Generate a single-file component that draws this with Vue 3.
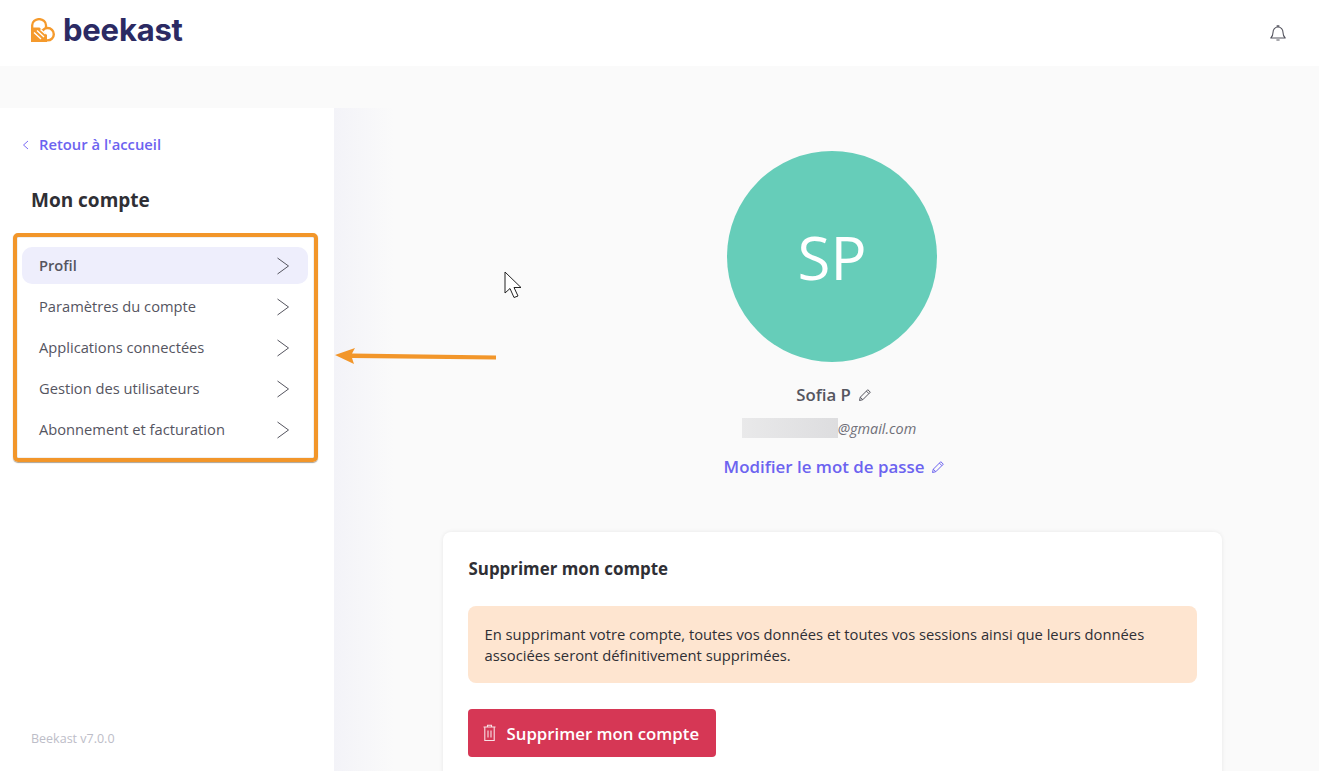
<template>
  <div class="page">
    <header class="topbar">
      <div class="logo">
        <svg class="logo-mark" width="24" height="24" viewBox="0 0 24 24" fill="none">
          <path d="M1.2 11V7.3a6.9 6.2 0 0 1 13.8 0V10" stroke="#f59a2c" stroke-width="2.3" />
          <circle cx="16.6" cy="16.2" r="6.2" stroke="#f59a2c" stroke-width="2.4" />
          <path d="M0 9.6H8.5L16 17V24H0Z" fill="#f59a2c" />
          <path d="M6 12.5l7 6.5M3 14.5l7 6.5M9.5 11.5l5 4.5" stroke="#fff" stroke-width="1.4" />
        </svg>
        <span class="logo-text">beekast</span>
      </div>
      <svg class="bell" width="18" height="18" viewBox="0 0 18 18" fill="none" stroke="#55555f" stroke-width="1.1">
        <path d="M1.8 14h14.4c-1.3-1.3-2.2-2.6-2.2-5.6 0-3-2-5.4-5-5.4s-5 2.4-5 5.4c0 3-.9 4.3-2.2 5.6Z" stroke-linejoin="round" />
        <path d="M8.2 3V1.8h1.6V3M7.4 16h3.2" />
      </svg>
    </header>

    <div class="body">
      <aside class="sidebar">
        <a class="back">
          <svg width="7" height="10" viewBox="0 0 7 10" fill="none" stroke="#7b6cf6" stroke-width="1">
            <path d="M6 1 1.5 5 6 9" />
          </svg>
          <span>Retour à l'accueil</span>
        </a>
        <h2 class="side-title">Mon compte</h2>
        <nav class="menu">
          <a v-for="item in menu" :key="item" class="menu-item" :class="{ active: item === 'Profil' }">
            <span class="menu-label">{{ item }}</span>
            <svg width="14" height="18" viewBox="0 0 14 18" fill="none" stroke="#55555f" stroke-width="1">
              <path d="M1.5 1 12.5 9 1.5 17" />
            </svg>
          </a>
        </nav>
        <div class="version">Beekast v7.0.0</div>
      </aside>

      <main class="main">
        <div class="avatar">SP</div>
        <div class="name">
          <span>Sofia P</span>
          <svg width="14" height="14" viewBox="0 0 14 14" fill="none" stroke="#55555f" stroke-width="1">
            <path :d="pencil" stroke-linejoin="round" />
          </svg>
        </div>
        <div class="email"><span class="blur"></span><span>@gmail.com</span></div>
        <a class="password">
          <span>Modifier le mot de passe</span>
          <svg width="14" height="14" viewBox="0 0 14 14" fill="none" stroke="#6c63f0" stroke-width="1">
            <path :d="pencil" stroke-linejoin="round" />
          </svg>
        </a>

        <section class="card">
          <h3>Supprimer mon compte</h3>
          <p class="warning">
            En supprimant votre compte, toutes vos données et toutes vos sessions ainsi que leurs données
            associées seront définitivement supprimées.
          </p>
          <button class="danger">
            <svg width="13" height="18" viewBox="0 0 13 18" fill="none" stroke="#fff" stroke-width="1.1" opacity="0.85">
              <path d="M.5 3h12M4.5 3V1.2h4V3M1.8 3v13.5h9.4V3M5 6.5v7M8 6.5v7" />
            </svg>
            <span>Supprimer mon compte</span>
          </button>
        </section>
      </main>
    </div>

    <!-- annotations drawn on top of the capture -->
    <div class="frame"></div>
    <svg class="arrow" width="164" height="20" viewBox="0 0 164 20">
      <path d="M2 8 22 1 19 6.5 163 8.5V12.5L19 11 21 17Z" fill="#f2962a" />
    </svg>
    <svg class="cursor" width="20" height="30" viewBox="0 0 20 30">
      <path d="M1 1V22L6 17.5 10 26.5 14 25 10 16.5H17Z" fill="#fff" stroke="#222" stroke-width="1" stroke-linejoin="round" />
    </svg>
  </div>
</template>

<script setup>
const menu = [
  'Profil',
  'Paramètres du compte',
  'Applications connectées',
  'Gestion des utilisateurs',
  'Abonnement et facturation'
]
const pencil = 'M1.5 12.5l.8-3.3L9.8 1.7l2.5 2.5-7.5 7.5ZM2.3 9.2l2.5 2.5M8.4 3.1l2.5 2.5'
</script>

<style>
html,
body {
  margin: 0;
  overflow: hidden;
}
</style>

<style scoped>
.page {
  position: relative;
  height: 771px;
  background: #fafafa;
  font-family: "Open Sans", "Liberation Sans", sans-serif;
  color: #2f2f35;
  overflow: hidden;
}
.topbar {
  height: 66px;
  background: #fff;
  display: flex;
  align-items: center;
  justify-content: space-between;
  padding: 0 32px 0 31px;
}
.logo {
  display: flex;
  align-items: center;
  gap: 8px;
  margin-top: -7px;
}
.logo-text {
  font-family: Inter, "Open Sans", sans-serif;
  font-size: 31px;
  font-weight: 700;
  color: #2b2a63;
  letter-spacing: -0.2px;
  line-height: 32px;
}
.body {
  display: flex;
  margin-top: 42px;
  height: 663px;
}
.sidebar {
  width: 334px;
  flex-shrink: 0;
  background: #fff;
  position: relative;
  box-sizing: border-box;
  padding-top: 27px;
}
.back {
  display: flex;
  align-items: center;
  gap: 10px;
  padding-left: 22px;
  font-size: 14.8px;
  font-weight: 600;
  line-height: 19px;
  color: #6c63f0;
}
.side-title {
  margin: 33px 0 0 31px;
  font-size: 19px;
  font-weight: 700;
  line-height: 26px;
  color: #2f2f35;
}
.menu {
  margin: 34px 26px 0 22px;
  display: flex;
  flex-direction: column;
  gap: 4px;
}
.menu-item {
  height: 37px;
  display: flex;
  align-items: center;
  justify-content: space-between;
  padding: 0 18px 0 17px;
  border-radius: 10px;
  font-size: 14.7px;
  color: #55555f;
}
.menu-label {
  margin-top: -2px;
}
.menu-item.active {
  background: #eeeefc;
  font-weight: 600;
}
.version {
  position: absolute;
  left: 31px;
  bottom: 24px;
  font-size: 12.5px;
  line-height: 17px;
  color: #bdbdc8;
}
.main {
  flex: 1;
  display: flex;
  flex-direction: column;
  align-items: center;
  padding-top: 43px;
  padding-left: 11px;
  background: linear-gradient(90deg, #f3f3f8 0, #fafafa 60px);
}
.avatar {
  width: 210px;
  height: 211px;
  flex-shrink: 0;
  border-radius: 50%;
  background: #66cdb9;
  color: #fff;
  font-size: 60px;
  display: flex;
  align-items: center;
  justify-content: center;
}
.name {
  display: flex;
  align-items: center;
  gap: 7px;
  margin-top: 22px;
  margin-left: 4px;
  font-size: 16.8px;
  font-weight: 600;
  line-height: 22px;
  color: #55555f;
}
.email {
  display: flex;
  align-items: center;
  margin-top: 12px;
  margin-right: 6px;
  height: 20px;
  font-size: 14.4px;
  font-style: italic;
  color: #6f6f78;
}
.blur {
  width: 96px;
  height: 20px;
  background: linear-gradient(90deg, #e9e9ea, #dddddf);
}
.password {
  display: flex;
  align-items: center;
  gap: 7px;
  margin-top: 18px;
  margin-left: 5px;
  font-size: 16.9px;
  font-weight: 600;
  line-height: 22px;
  color: #6c63f0;
}
.card {
  width: 779px;
  flex-shrink: 0;
  box-sizing: border-box;
  margin-top: 54px;
  padding: 26px 25px 40px;
  background: #fff;
  border-radius: 8px;
  box-shadow: 0 0 4px rgba(0, 0, 0, 0.08);
}
.card h3 {
  margin: 0 0 0 1px;
  font-size: 16.9px;
  font-weight: 700;
  line-height: 22px;
}
.warning {
  margin: 26px 0 0;
  padding: 18px 17px 17px;
  background: #fee5d0;
  border-radius: 8px;
  font-size: 14.75px;
  line-height: 21px;
  color: #2f2f35;
}
.danger {
  display: flex;
  align-items: center;
  gap: 11px;
  height: 48px;
  margin-top: 26px;
  padding: 0 17px 0 15px;
  border: 0;
  border-radius: 4px;
  background: #d63755;
  color: #fff;
  font-family: inherit;
  font-size: 16.8px;
  font-weight: 600;
}
.frame {
  position: absolute;
  left: 13px;
  top: 233px;
  width: 305px;
  height: 229px;
  box-sizing: border-box;
  border: 4px solid #f2962a;
  border-radius: 5px;
  box-shadow: 0 1px 1px rgba(90, 70, 40, 0.5), inset 0 0 1px rgba(60, 50, 40, 0.7);
}
.arrow {
  position: absolute;
  left: 333px;
  top: 347px;
}
.cursor {
  position: absolute;
  left: 504px;
  top: 271px;
}
</style>
